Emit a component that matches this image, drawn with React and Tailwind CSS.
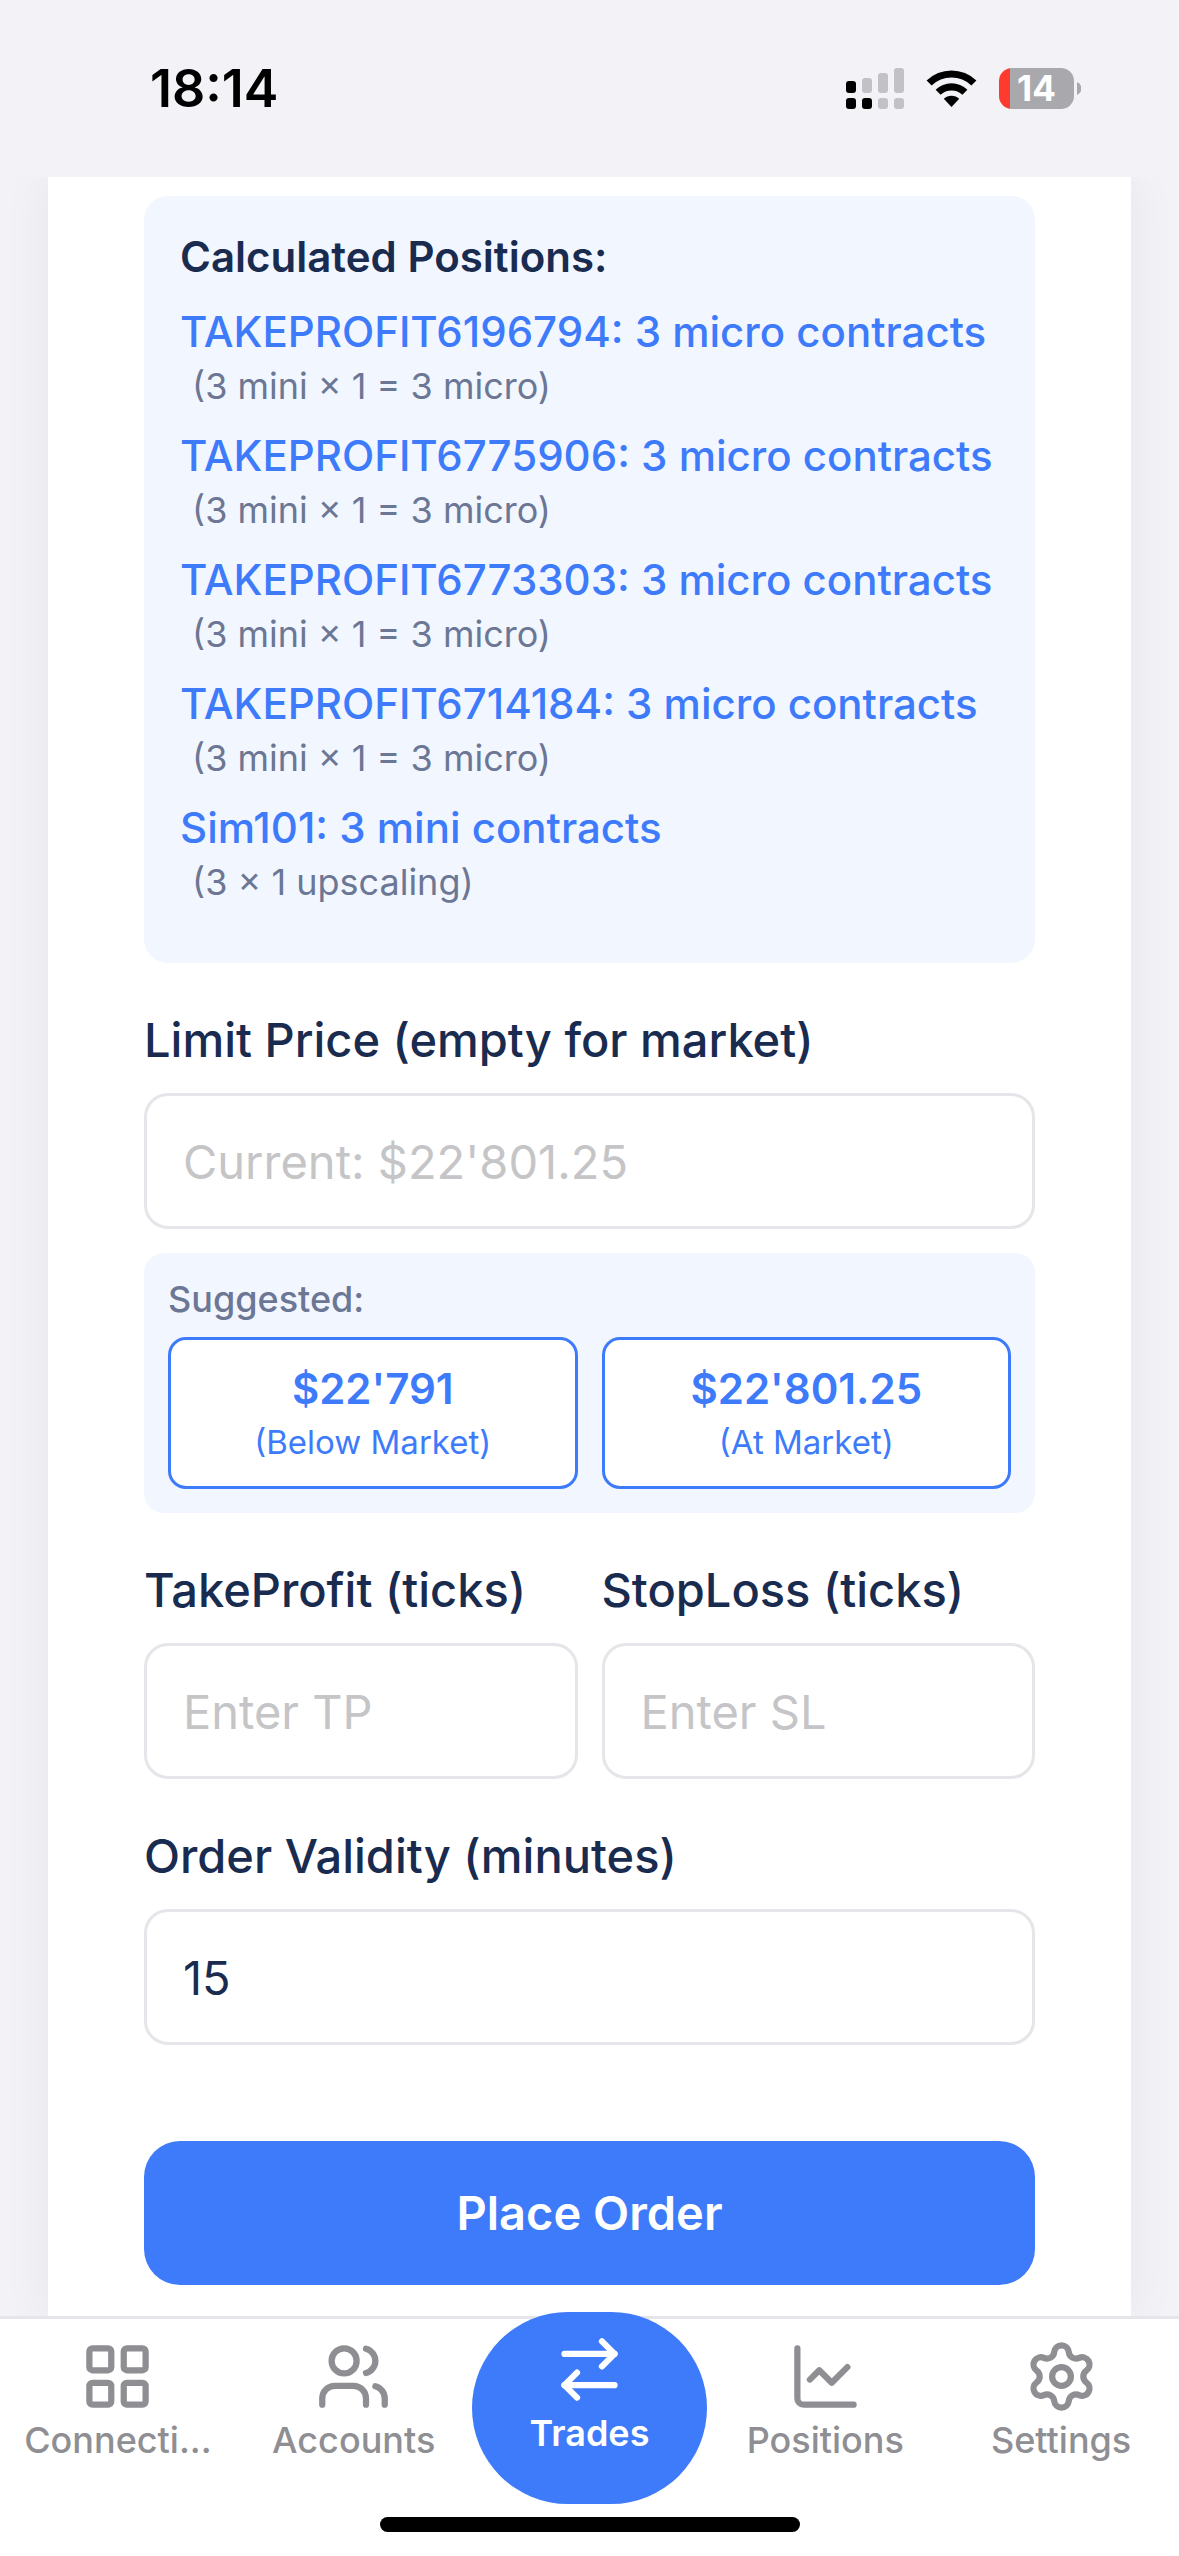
import React, { useState } from 'react';
import { ArrowRightLeft, ChartLine, LayoutGrid, Settings, Users } from 'lucide-react';

const positions = [
  { account: 'TAKEPROFIT6196794', amount: '3 micro contracts', note: '(3 mini × 1 = 3 micro)' },
  { account: 'TAKEPROFIT6775906', amount: '3 micro contracts', note: '(3 mini × 1 = 3 micro)' },
  { account: 'TAKEPROFIT6773303', amount: '3 micro contracts', note: '(3 mini × 1 = 3 micro)' },
  { account: 'TAKEPROFIT6714184', amount: '3 micro contracts', note: '(3 mini × 1 = 3 micro)' },
  { account: 'Sim101', amount: '3 mini contracts', note: '(3 × 1 upscaling)' },
];

const suggestions = [
  { price: "$22'791", hint: '(Below Market)' },
  { price: "$22'801.25", hint: '(At Market)' },
];

const tabs = [
  { label: 'Connecti...', icon: LayoutGrid },
  { label: 'Accounts', icon: Users },
  { label: 'Trades', icon: ArrowRightLeft, active: true },
  { label: 'Positions', icon: ChartLine },
  { label: 'Settings', icon: Settings },
];

const StatusBar = () => (
  <header className="h-[177px] shrink-0 relative z-10 bg-[#f2f2f7] flex items-center justify-between pl-[150px] pr-[98px]">
    <span className="text-[52px] leading-[60px] font-semibold text-black">18:14</span>
    <div className="flex items-center gap-[22px]">
      <svg width="58" height="41" viewBox="0 0 58 41" aria-hidden="true">
        <g fill="#000">
          <rect x="0" y="13" width="10" height="12" rx="3" />
          <rect x="0" y="30" width="10" height="11" rx="3" />
          <rect x="16" y="30" width="10" height="11" rx="3" />
        </g>
        <g fill="#c2c1c6">
          <rect x="16" y="10" width="10" height="15" rx="3" />
          <rect x="32" y="5" width="10" height="20" rx="3" />
          <rect x="48" y="0" width="10" height="25" rx="3" />
          <rect x="32" y="30" width="10" height="11" rx="3" />
          <rect x="48" y="30" width="10" height="11" rx="3" />
        </g>
      </svg>
      <svg width="51" height="41" viewBox="0 0 51 41" aria-hidden="true">
        <path d="M0.6 12.6a35.5 35.5 0 0 1 49.8 0l-5 5a28.5 28.5 0 0 0-39.8 0z" />
        <path d="M9.6 21.8a22.8 22.8 0 0 1 31.8 0l-5 5a15.8 15.8 0 0 0-21.8 0z" />
        <path d="M17.8 30.8a11 11 0 0 1 15.4 0l-7.7 8.2z" />
      </svg>
      <div className="flex items-center gap-[3px]">
        <div className="w-[75px] h-[41px] rounded-[13px] flex items-center justify-center overflow-hidden bg-linear-to-r from-[#ff3b30] from-[11px] to-[#a9a9ad] to-[11px]">
          <span className="text-[35px] leading-[41px] font-bold text-white">14</span>
        </div>
        <svg width="4" height="13" viewBox="0 0 4 13" aria-hidden="true">
          <path d="M0 0a7 7 0 0 1 0 13z" fill="#a9a9ad" />
        </svg>
      </div>
    </div>
  </header>
);

const Field = ({ id, label, ...props }) => (
  <div className="min-w-0">
    <label htmlFor={id} className="block mb-6 text-[47px] leading-[58px] font-medium text-[#1a2b50] whitespace-nowrap">
      {label}
    </label>
    <input
      id={id}
      type="text"
      inputMode="decimal"
      className="block w-full h-[136px] px-9 rounded-3xl border-[3px] border-[#e5e5ea] bg-white text-[47px] text-[#1a2b50] placeholder:text-[#c5c5c7] outline-none"
      {...props}
    />
  </div>
);

const TabBar = () => (
  <nav className="relative z-10 shrink-0 bg-white border-t-[3px] border-[#e5e5ea]">
    <div className="grid grid-cols-5 h-[185px]">
      {tabs.map(({ label, icon: Icon, active }) => (
        <button
          key={label}
          type="button"
          aria-current={active ? 'page' : undefined}
          className={
            active
              ? '-mt-[7px] h-48 pt-5 rounded-[96px] bg-[#3e7bfa] text-white flex flex-col items-center gap-1 font-semibold'
              : 'pt-5 text-[#8e8e93] flex flex-col items-center gap-1 font-medium'
          }
        >
          <Icon size={75} strokeWidth={2} />
          <span className="text-[36px] leading-[44px]">{label}</span>
        </button>
      ))}
    </div>
    <div className="mt-[13px] mb-6 mx-auto w-[420px] h-[15px] rounded-full bg-black" />
  </nav>
);

const App = () => {
  const [price, setPrice] = useState('');
  const [takeProfit, setTakeProfit] = useState('');
  const [stopLoss, setStopLoss] = useState('');
  const [validity, setValidity] = useState('15');

  return (
    <div className="min-h-screen bg-[#f2f2f7] flex flex-col font-['Inter',sans-serif]">
      <StatusBar />

      <main className="flex-1 flex flex-col px-12">
        <form
          className="flex-1 bg-white px-24 pt-[19px] pb-[30px] shadow-[0_0_48px_rgba(0,0,0,0.06)]"
          onSubmit={(e) => e.preventDefault()}
        >
          {/* Calculated sizes per account */}
          <section className="rounded-3xl bg-[#f2f6ff] p-9">
            <h2 className="mb-[25px] text-[42px] leading-[50px] font-semibold text-[#1a2b50]">Calculated Positions:</h2>
            <ul>
              {positions.map((p) => (
                <li key={p.account} className="mb-4">
                  <p className="text-[42px] leading-[50px] font-medium text-[#3e7bfa] whitespace-nowrap">
                    {p.account}: {p.amount}
                  </p>
                  <p className="ml-3 text-[36px] leading-[58px] text-[#6b7794]">{p.note}</p>
                </li>
              ))}
            </ul>
          </section>

          <div className="mt-12">
            <Field
              id="limit-price"
              label="Limit Price (empty for market)"
              placeholder="Current: $22'801.25"
              value={price}
              onChange={(e) => setPrice(e.target.value)}
            />
          </div>

          <section className="mt-6 rounded-[20px] bg-[#f2f6ff] p-6">
            <p className="mb-4 text-[36px] leading-[44px] font-medium text-[#6b7794]">Suggested:</p>
            <div className="grid grid-cols-2 gap-6">
              {suggestions.map((s) => (
                <button
                  key={s.price}
                  type="button"
                  onClick={() => setPrice(s.price)}
                  className="py-6 rounded-[18px] border-[3px] border-[#3e7bfa] bg-white text-[#3e7bfa] flex flex-col items-center gap-2"
                >
                  <span className="text-[42px] leading-[50px] font-semibold">{s.price}</span>
                  <span className="text-[33px] leading-[40px]">{s.hint}</span>
                </button>
              ))}
            </div>
          </section>

          <div className="mt-12 grid grid-cols-2 gap-6">
            <Field
              id="take-profit"
              label="TakeProfit (ticks)"
              placeholder="Enter TP"
              value={takeProfit}
              onChange={(e) => setTakeProfit(e.target.value)}
            />
            <Field
              id="stop-loss"
              label="StopLoss (ticks)"
              placeholder="Enter SL"
              value={stopLoss}
              onChange={(e) => setStopLoss(e.target.value)}
            />
          </div>

          <div className="mt-12">
            <Field
              id="validity"
              label="Order Validity (minutes)"
              value={validity}
              onChange={(e) => setValidity(e.target.value)}
            />
          </div>

          <button
            type="submit"
            className="mt-24 w-full h-36 rounded-[36px] bg-[#3e7bfa] text-[47px] leading-[58px] font-semibold text-white"
          >
            Place Order
          </button>
        </form>
      </main>

      <TabBar />
    </div>
  );
};

export default App;
